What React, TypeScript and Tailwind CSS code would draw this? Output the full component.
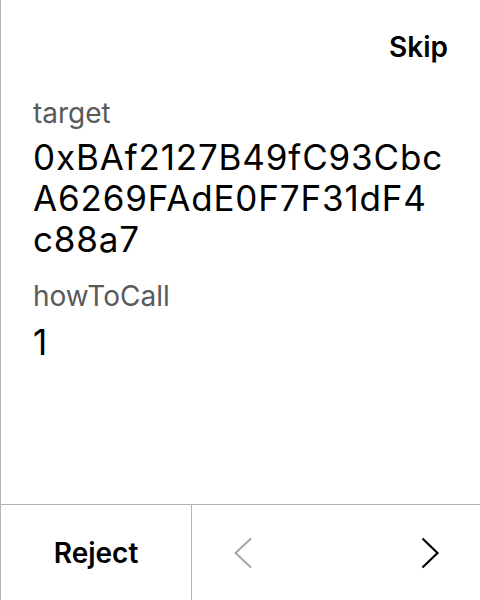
import React from "react";

export default function App() {
  return (
    <div
      className="w-[480px] h-[600px] flex flex-col bg-white border-l border-[#b3b3b3] text-black"
      style={{ fontFamily: "Inter, 'Noto Sans', sans-serif" }}
    >
      <div className="flex-1 flex flex-col">
        <div className="flex justify-end pt-[30px] pr-[32px]">
          <button className="text-[28px] font-semibold leading-[34px]">Skip</button>
        </div>
        <div className="pl-[32px] pr-[20px] pt-[32px]">
          <div className="text-[28px] leading-[34px] text-[#5a5a5a]">target</div>
          <div className="text-[35px] leading-[41px] tracking-[0.85px] break-words mt-[7px]">
            0xBAf2127B49fC93Cbc<wbr />A6269FAdE0F7F31dF4<wbr />c88a7
          </div>
          <div className="text-[28px] leading-[34px] text-[#5a5a5a] mt-[19px]">howToCall</div>
          <div className="text-[35px] leading-[41px] mt-[9px]">1</div>
        </div>
      </div>
      <div className="h-[96px] flex border-t border-[#b3b3b3]">
        <button className="w-[191px] flex items-center justify-center text-[28px] font-semibold border-r border-[#b3b3b3]">
          Reject
        </button>
        <div className="flex-1 flex items-center justify-between pl-[41px] pr-[40px]">
          <svg width="20" height="32" viewBox="0 0 20 32" fill="none">
            <path d="M18 1.5 L2.5 16 L18 30.5" stroke="#a6a6a6" strokeWidth="2" />
          </svg>
          <svg width="20" height="32" viewBox="0 0 20 32" fill="none">
            <path d="M2.5 1.5 L17.5 16 L2.5 30.5" stroke="#000" strokeWidth="2.2" />
          </svg>
        </div>
      </div>
    </div>
  );
}
